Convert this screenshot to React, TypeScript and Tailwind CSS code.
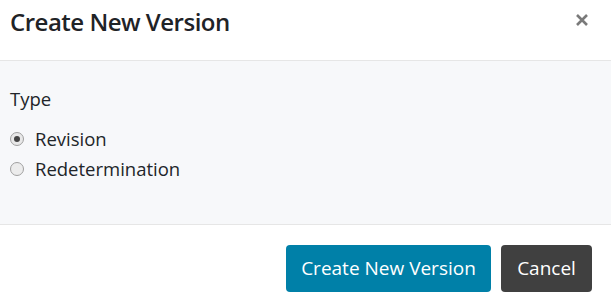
export default function App() {
  const font = { fontFamily: '"Open Sans", "Noto Sans", sans-serif' };
  return (
    <div className="w-[611px] h-[306px] bg-white text-[#212529] overflow-hidden" style={font}>
      {/* Header */}
      <div className="h-[61px] flex items-start justify-between pl-[10px] pr-[22px] pt-[8px] border-b border-[#e6e6e6]">
        <h2 className="text-[24px] leading-[28px] font-semibold tracking-[-0.5px] text-[#1f2327]">Create New Version</h2>
        <button className="mt-[5px] mr-[0px]">
          <svg width="14" height="14" viewBox="0 0 14 14">
            <path d="M2 2 L12 12 M12 2 L2 12" stroke="#7a7a7a" strokeWidth="2.6" strokeLinecap="butt" />
          </svg>
        </button>
      </div>

      {/* Body */}
      <div className="h-[164px] bg-[#f7f8fa] border-b border-[#e6e6e6] pl-[10px] pt-[27px]">
        <div className="text-[18.5px] leading-[22px] mb-[18px]">Type</div>
        <div className="flex flex-col gap-[8px]">
          <label className="flex items-center gap-[11px] text-[18.5px] leading-[22px]">
            <span className="w-[14px] h-[14px] rounded-full border border-[#a0a0a0] bg-[#e8e8e8] flex items-center justify-center">
              <span className="w-[6px] h-[6px] rounded-full bg-[#444]" />
            </span>
            Revision
          </label>
          <label className="flex items-center gap-[11px] text-[18.5px] leading-[22px]">
            <span className="w-[14px] h-[14px] rounded-full border border-[#a0a0a0] bg-[#ececec]" />
            Redetermination
          </label>
        </div>
      </div>

      {/* Footer */}
      <div className="flex justify-end gap-[10px] pt-[20px] pr-[19px]">
        <button className="h-[47px] w-[205px] rounded-[4px] bg-[#0080a8] text-white text-[19px]">
          Create New Version
        </button>
        <button className="h-[47px] w-[91px] rounded-[4px] bg-[#404040] text-white text-[19px]">
          Cancel
        </button>
      </div>
    </div>
  );
}
